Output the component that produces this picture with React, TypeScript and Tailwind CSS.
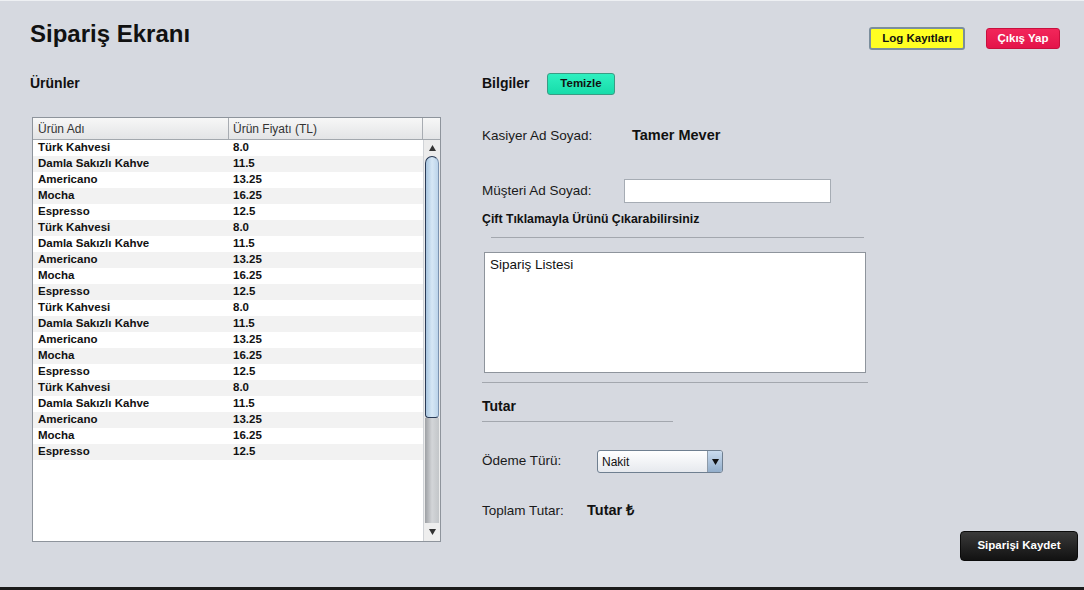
import React from "react";

const rows: [string, string][] = [
  ["Türk Kahvesi", "8.0"],
  ["Damla Sakızlı Kahve", "11.5"],
  ["Americano", "13.25"],
  ["Mocha", "16.25"],
  ["Espresso", "12.5"],
];
const allRows = [...rows, ...rows, ...rows, ...rows];

function Table() {
  return (
    <div className="ml-[2px] mt-[23px] w-[409px] h-[425px] border border-[#8e949c] bg-white flex flex-col">
      <div className="flex h-[22px] border-b border-[#a3a8ae] bg-gradient-to-b from-[#f7f7f7] to-[#e3e4e6] text-[12px] text-[#333] shrink-0">
        <div className="w-[196px] border-r border-[#a8acb2] pl-[5px] flex items-center">Ürün Adı</div>
        <div className="w-[194px] border-r border-[#a8acb2] pl-[4px] flex items-center">Ürün Fiyatı (TL)</div>
        <div className="flex-1" />
      </div>
      <div className="flex flex-1">
        <div className="w-[390px]">
          {allRows.map(([n, p], i) => (
            <div
              key={i}
              className={`flex h-[16px] items-center text-[11.5px] font-bold text-[#111] ${i % 2 === 1 ? "bg-[#f2f2f2]" : "bg-white"}`}
            >
              <div className="w-[196px] pl-[5px]">{n}</div>
              <div className="pl-[4px]">{p}</div>
            </div>
          ))}
        </div>
        <div className="flex-1 flex flex-col border-l border-[#d0d3d7] bg-[#ececec]">
          <div className="h-[16px] flex items-center justify-center shrink-0">
            <svg width="7" height="6" viewBox="0 0 7 6"><path d="M3.5 0 L7 6 L0 6 Z" fill="#333" /></svg>
          </div>
          <div className="h-[262px] mx-[1px] rounded-t-[10px] rounded-b-[5px] border border-[#2a3a55] border-r-[#7b93b0] bg-gradient-to-r from-[#a9c6e0] via-[#d6e7f5] to-[#bcd4ea] shrink-0" />
          <div className="flex-1 mx-[1px] bg-gradient-to-r from-[#9da0a4] via-[#d3d5d8] to-[#c3c6c9]" />
          <div className="h-[18px] flex items-center justify-center shrink-0 bg-[#eeeeee]">
            <svg width="7" height="6" viewBox="0 0 7 6"><path d="M0 0 L7 0 L3.5 6 Z" fill="#333" /></svg>
          </div>
        </div>
      </div>
    </div>
  );
}

export default function App() {
  return (
    <div
      className="w-[1084px] h-[590px] bg-[#d6d9e0] border-t border-t-[#eef0f3] border-b-[3px] border-b-[#1b1b1b] flex flex-col text-[#111] overflow-hidden"
      style={{ fontFamily: '"Liberation Sans", Arial, sans-serif' }}
    >
      {/* header */}
      <div className="flex h-[59px] shrink-0">
        <div className="pl-[30px] pt-[20px] text-[24px] font-bold leading-[26px] text-[#111]">Sipariş Ekranı</div>
        <div className="flex-1" />
        <div className="flex pt-[26px] pr-[24px] gap-[21px] items-start">
          <button className="w-[96px] h-[23px] rounded-[3px] border-2 border-[#7b8e9c] bg-[#ffff22] text-[11.5px] font-bold text-[#111] flex items-center justify-center">
            Log Kayıtları
          </button>
          <button className="mt-[1px] w-[74px] h-[21px] rounded-[3px] border border-[#c8103e] bg-gradient-to-b from-[#f2265a] to-[#e4134a] text-[11.5px] font-bold text-white flex items-center justify-center">
            Çıkış Yap
          </button>
        </div>
      </div>

      <div className="flex flex-1">
        {/* left column */}
        <div className="pl-[30px] w-[440px] shrink-0">
          <div className="mt-[12px] h-[22px] flex items-center text-[14px] font-bold">Ürünler</div>
          <Table />
        </div>

        {/* right column */}
        <div className="ml-[42px] w-[390px] shrink-0 flex flex-col text-[13.5px]">
          <div className="mt-[13px] h-[22px] flex items-center">
            <span className="text-[14px] font-bold w-[65px] -mt-[2px]">Bilgiler</span>
            <button className="w-[68px] h-[22px] rounded-[3px] border border-[#3a9c84] bg-gradient-to-b from-[#2ef0c0] to-[#16dcaa] text-[11.5px] font-bold text-[#111] flex items-center justify-center">
              Temizle
            </button>
          </div>
          <div className="mt-[30px] h-[22px] flex items-center">
            <span className="w-[150px] text-[#1a1a1a]">Kasiyer Ad Soyad:</span>
            <span className="font-bold text-[14.5px]">Tamer Mever</span>
          </div>
          <div className="mt-[32px] h-[24px] flex items-center">
            <span className="w-[142px] text-[#1a1a1a]">Müşteri Ad Soyad:</span>
            <div className="w-[207px] h-[24px] bg-white border border-[#a6acb4]" />
          </div>
          <div className="mt-[8px] h-[16px] flex items-center text-[12.3px] font-bold">Çift Tıklamayla Ürünü Çıkarabilirsiniz</div>
          <div className="mt-[10px] ml-[9px] w-[373px] h-[1px] bg-[#a3a7ae]" />
          <div className="mt-[14px] ml-[2px] w-[382px] h-[121px] bg-white border border-[#8e949c] pl-[5px] pt-[3px] text-[13.5px] leading-[18px]">
            Sipariş Listesi
          </div>
          <div className="mt-[9px] w-[386px] h-[1px] bg-[#a3a7ae]" />
          <div className="mt-[15px] h-[16px] flex items-center text-[14px] font-bold">Tutar</div>
          <div className="mt-[7px] w-[191px] h-[1px] bg-[#a3a7ae]" />
          <div className="mt-[28px] h-[23px] flex items-center">
            <span className="w-[115px] text-[#1a1a1a]">Ödeme Türü:</span>
            <div className="w-[126px] h-[23px] rounded-[3px] border border-[#6f7f90] bg-gradient-to-b from-[#ffffff] to-[#e6e9ee] flex items-center">
              <span className="flex-1 pl-[4px] text-[12px]">Nakit</span>
              <div className="w-[15px] h-[21px] border-l border-[#8d9aa8] rounded-r-[2px] bg-gradient-to-b from-[#c9dbee] to-[#93aecb] flex items-center justify-center">
                <svg width="7" height="6" viewBox="0 0 7 6"><path d="M0 0 L7 0 L3.5 6 Z" fill="#111" /></svg>
              </div>
            </div>
          </div>
          <div className="mt-[27px] h-[22px] flex items-center">
            <span className="w-[105px] text-[#1a1a1a]">Toplam Tutar:</span>
            <span className="font-bold text-[14.5px]">Tutar ₺</span>
          </div>
        </div>

        {/* button column */}
        <div className="flex-1 flex flex-col justify-end items-end pr-[6px] pb-[26px]">
          <button className="w-[118px] h-[30px] rounded-[4px] border border-[#0b0b0b] bg-gradient-to-b from-[#3a3a3a] to-[#121212] text-[11.5px] font-bold text-white flex items-center justify-center">
            Siparişi Kaydet
          </button>
        </div>
      </div>
    </div>
  );
}
